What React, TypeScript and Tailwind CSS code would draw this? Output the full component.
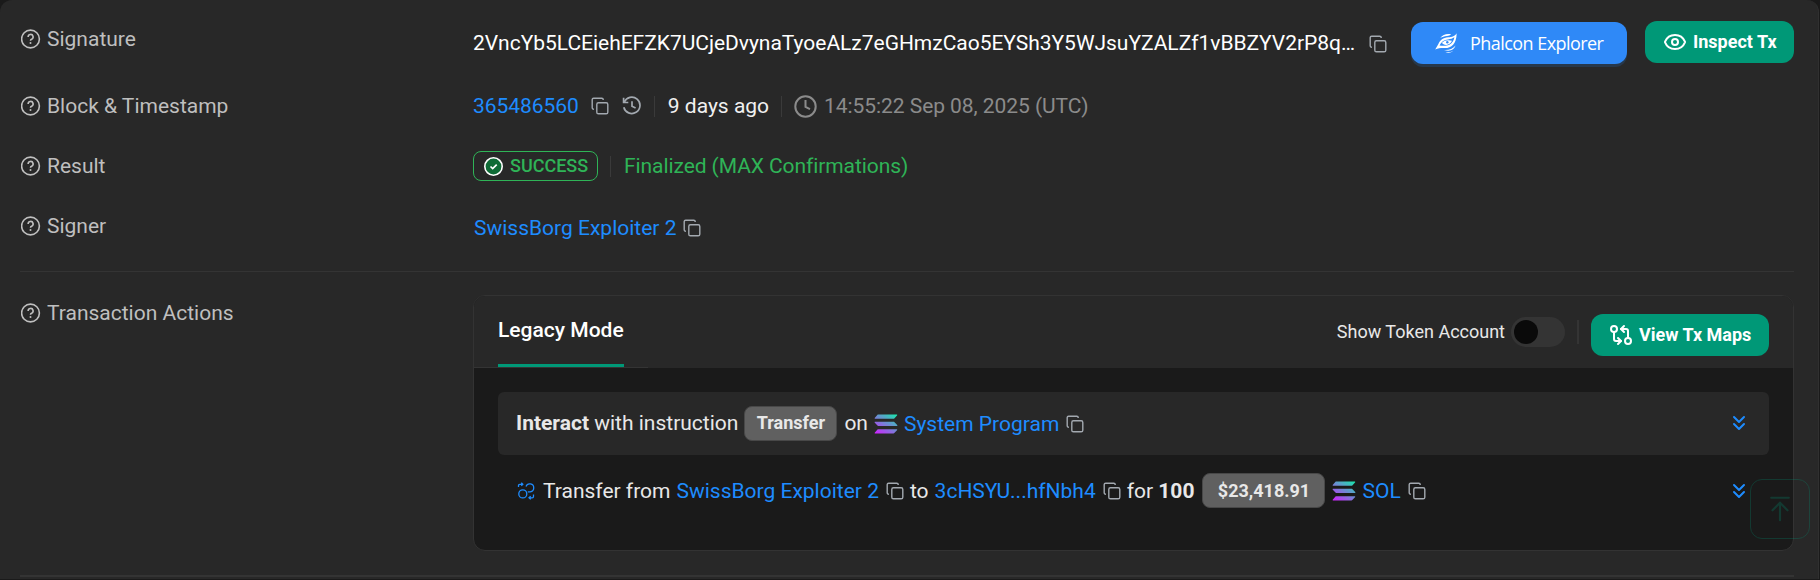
import React from "react";
import { ChevronsDown, Eye, GitCompareArrows, ArrowUpToLine } from "lucide-react";

function HelpIcon() {
  return (
    <svg className="ml-px size-5 shrink-0" viewBox="0 0 20 20" fill="none" stroke="#bfbfbf" strokeWidth="1.6">
      <circle cx="9.5" cy="10" r="8.9" />
      <path d="M7.1 7.9a2.5 2.5 0 1 1 3.5 2.3c-.8.3-1.1.7-1.1 1.5" />
      <circle cx="9.5" cy="14" r="1" fill="#bfbfbf" stroke="none" />
    </svg>
  );
}

function CopyIcon({ className = "" }: { className?: string }) {
  return (
    <svg className={`size-[18px] shrink-0 ${className}`} viewBox="0 0 18 18" fill="none" stroke="#a3a9b0" strokeWidth="1.4">
      <rect x="5.8" y="5.8" width="11" height="11" rx="1.6" />
      <path d="M2.9 12.2H2.6A1.4 1.4 0 0 1 1.2 10.8V2.6A1.4 1.4 0 0 1 2.6 1.2h8.2a1.4 1.4 0 0 1 1.4 1.4v.4" />
    </svg>
  );
}

function HistoryIcon() {
  return (
    <svg className="size-5 shrink-0" viewBox="0 0 20 20" fill="none" stroke="#a3a9b0" strokeWidth="1.7">
      <path d="M2.2 6.2A8.2 8.2 0 1 1 1.8 11.2" />
      <path d="M1.6 1.8v4.7h4.7" />
      <path d="M10 5.3v5l3.6 1.8" />
    </svg>
  );
}

function ClockIcon() {
  return (
    <svg className="size-[23px] shrink-0" viewBox="0 0 23 23" fill="none" stroke="#8b8b8b" strokeWidth="2">
      <circle cx="11.5" cy="11.5" r="10.2" />
      <path d="M11.5 5v7l4.5 2.2" />
    </svg>
  );
}

function SuccessIcon() {
  return (
    <svg className="size-[19px] shrink-0" viewBox="0 0 19 19" fill="none">
      <circle cx="9.5" cy="9.5" r="8.7" fill="#0f6b36" stroke="#fff" strokeWidth="1.6" />
      <path d="M6.5 9.5l2.2 2.1 4-3.9" stroke="#fff" strokeWidth="1.7" />
    </svg>
  );
}

function SolanaIcon({ id, className = "" }: { id: string; className?: string }) {
  return (
    <svg className={`h-5 w-6 shrink-0 ${className}`} viewBox="0 0 24 20">
      <defs>
        <linearGradient id={id} gradientUnits="userSpaceOnUse" x1="21" y1="-2" x2="5" y2="22">
          <stop offset="0" stopColor="#10f0a8" />
          <stop offset="1" stopColor="#d020ff" />
        </linearGradient>
      </defs>
      <g fill={`url(#${id})`}>
        <path d="M4.2.5H22.6c.6 0 .8.6.4 1L20.3 4.4c-.2.2-.5.3-.8.3H1.3c-.6 0-.8-.6-.4-1L3.5.8C3.7.6 3.9.5 4.2.5z" />
        <path d="M1.2 7.7h18.3c.3 0 .6.1.8.3l2.9 3c.4.4.1 1-.4 1H4.5c-.3 0-.6-.1-.8-.3L.8 8.7c-.4-.4-.1-1 .4-1z" />
        <path d="M4.2 15.2H22.6c.6 0 .8.6.4 1L20.3 19.1c-.2.2-.5.3-.8.3H1.3c-.6 0-.8-.6-.4-1l2.6-2.9c.2-.2.4-.3.7-.3z" />
      </g>
    </svg>
  );
}

function PhalconIcon() {
  return (
    <svg className="h-5 w-[22px] shrink-0" viewBox="0 0 22 20" fill="none">
      <g fill="#fff">
        <path d="M5.2 5C7.8 1.7 12 .3 16.2 1.5c-1.2.9-2.6 1.3-4.2 1.5-2.6.3-4.7.8-6.800 2z" />
        <path d="M21.7.2c-1.6 3-4.8 3.7-8.5 4.1C8 4.8 5.2 7 3.4 11L.2 16.6c3.3-1.6 6.2-1.7 9.3-1.6 6.6.2 11.9-3.4 12.2-14.8z" />
        <path d="M9 17c4.5.4 8.6-.8 11.6-4.5C19.3 16.6 15.3 19 9 17z" />
        <path d="M10.5 19.2c3.3.4 5.5-.1 7.5-1.5-1.8 2.2-4.8 2.8-7.5 1.5z" />
      </g>
      <path d="M4.5 12.6C6 8.8 9 6.8 13 6.4c2.6-.2 4.6-.8 6.4-2.1-.6 3.6-2.3 6.2-5.1 7.500-3.100 1.400-6.300 1-9.800.8z" fill="#2f89f7" />
      <path d="M7 9.700c2.400-2.900 6.800-3 10-1.900-1.200 2.900-3.500 4.200-5.900 4.100-2-.1-3.300-.7-4.100-2.200z" fill="#fff" />
      <circle cx="12.3" cy="9.200" r="1.200" fill="#2f89f7" />
    </svg>
  );
}

function TransferIcon() {
  return (
    <svg className="size-[18px] shrink-0" viewBox="0 0 18 18" fill="none" stroke="#1e8cff" strokeWidth="1.3">
      <circle cx="5.8" cy="11.9" r="4" />
      <path d="M9 4.400a4 4 0 1 1 4.300 5.400h-2.500" />
      <path d="M1.500 5V3.600c0-.8.5-1.300 1.300-1.300H5.800M4.300.8 5.800 2.300 4.300 3.800" />
      <path d="M16.500 12.500v2c0 .8-.5 1.300-1.300 1.300H12M13.700 14.200 12 15.800l1.700 1.600" />
    </svg>
  );
}

function Label({ children }: { children: React.ReactNode }) {
  return (
    <div className="flex h-6 w-[453px] shrink-0 items-center gap-[6px] text-[#bfbfbf]">
      <HelpIcon />
      <span>{children}</span>
    </div>
  );
}

function Divider({ className = "" }: { className?: string }) {
  return <span className={`h-[21px] w-px shrink-0 bg-[#3a3a3a] ${className}`} />;
}

export default function App() {
  return (
    <div className="h-[580px] w-[1820px] overflow-hidden bg-[#1a1a1a] font-[Roboto,sans-serif] text-[21px] leading-6 text-[#e8e8e8]">
      <div className="relative flex h-[579px] w-[1819px] flex-col rounded-t-xl border-r border-[#303030] bg-[#282828] pr-6 pl-5">
        <div className="flex h-[88px] items-start pt-[21px]">
          <div className="mt-[6px]">
            <Label>Signature</Label>
          </div>
          <span className="mt-[10px] w-[884px] shrink-0 whitespace-nowrap tracking-[-0.025px] text-white">
            2VncYb5LCEiehEFZK7UCjeDvynaTyoeALz7eGHmzCao5EYSh3Y5WJsuYZALZf1vBBZYV2rP8q…
          </span>
          <CopyIcon className="mt-[14px] ml-3" />
          <button className="mt-px ml-6 flex h-[42px] w-[216px] shrink-0 items-center rounded-xl bg-[#2f89f7] pl-6 font-['Open_Sans',sans-serif] text-[18px] text-white shadow-[0_3px_0_#27384b]">
            <PhalconIcon />
            <span className="ml-[13px] whitespace-nowrap tracking-[-0.55px]">Phalcon Explorer</span>
          </button>
          <button className="ml-[18px] flex h-[42px] w-[149px] shrink-0 items-center rounded-xl bg-[#009877] pl-[18px] text-[18px] font-bold text-white">
            <Eye size={24} />
            <span className="ml-[6px] whitespace-nowrap">Inspect Tx</span>
          </button>
        </div>

        <div className="flex h-[60px] items-start pt-[6px]">
          <Label>Block &amp; Timestamp</Label>
          <div className="flex h-6 items-center whitespace-nowrap">
            <span className="tracking-[-0.05px] text-[#1e8cff]">365486560</span>
            <CopyIcon className="mr-[13px] ml-3" />
            <HistoryIcon />
            <Divider className="mr-[13px] ml-3" />
            <span className="text-[#f0f0f0]">9 days ago</span>
            <Divider className="mr-3 ml-3" />
            <ClockIcon />
            <span className="ml-[7px] tracking-[-0.06px] text-[#8b8b8b]">14:55:22 Sep 08, 2025 (UTC)</span>
          </div>
        </div>

        <div className="flex h-[60px] items-start pt-[6px]">
          <Label>Result</Label>
          <div className="-mt-[3px] flex h-[30px] items-center whitespace-nowrap text-[#2fb457]">
            <span className="flex h-[30px] w-[125px] items-center rounded-lg border border-[#2fb457] pl-[10px] text-[18px] font-medium">
              <SuccessIcon />
              <span className="ml-[7px]">SUCCESS</span>
            </span>
            <Divider className="mr-[13px] ml-3" />
            <span className="tracking-[-0.08px]">Finalized (MAX Confirmations)</span>
          </div>
        </div>

        <div className="flex h-[64px] items-start border-b border-[#343434] pt-[6px]">
          <Label>Signer</Label>
          <div className="mt-[2px] ml-px flex h-6 items-center gap-[7px]">
            <span className="text-[#1e8cff]">SwissBorg Exploiter 2</span>
            <CopyIcon />
          </div>
        </div>

        <div className="flex h-[305px] items-start border-b-2 border-[#343434] pt-[23px]">
          <div className="mt-[6px]">
            <Label>Transaction Actions</Label>
          </div>
          <div className="h-[256px] w-[1321px] shrink-0 rounded-xl border border-[#333] bg-[#1a1a1a]">
            <div className="flex h-[72px] rounded-t-[11px] bg-[#282828] pr-6">
              <div className="flex w-[174px] border-b border-[#343434] pl-6">
                <div className="flex h-[71px] flex-col border-b-[3px] border-[#009877] pt-[22px] font-medium text-white">
                  <span className="whitespace-nowrap">Legacy Mode</span>
                </div>
              </div>
              <div className="ml-auto flex items-start pt-[18px]">
                <span className="mt-[6px] whitespace-nowrap text-[18px]">Show Token Account</span>
                <span className="mt-[3px] ml-[6px] flex h-[30px] w-[54px] items-center rounded-full bg-[#343434] pl-[3px]">
                  <span className="size-6 rounded-full bg-[#0a0a0a]" />
                </span>
                <span className="mt-[6px] mr-3 ml-3 h-6 w-[2px] bg-[#343434]" />
                <button className="flex h-[42px] w-[178px] items-center rounded-xl bg-[#009877] pl-[18px] text-[18px] font-bold text-white">
                  <GitCompareArrows size={24} />
                  <span className="ml-[6px] whitespace-nowrap">View Tx Maps</span>
                </button>
              </div>
            </div>
            <div className="px-6 pt-6">
              <div className="flex h-[63px] items-center rounded-md bg-[#282828] pr-[18px] pb-px pl-[18px] whitespace-nowrap">
                <span className="-mt-px">
                  <b>Interact</b> with instruction
                </span>
                <span className="mr-[7px] ml-[6px] flex h-[35px] w-[93px] items-center justify-center rounded-lg border border-[#484848] bg-[#606060] pb-px text-[18px] font-bold">
                  Transfer
                </span>
                <span className="-mt-px">on</span>
                <SolanaIcon id="sol-program" className="mt-px ml-[6px]" />
                <span className="mt-px ml-[6px] text-[#1e8cff]">System Program</span>
                <CopyIcon className="mt-px ml-[7px]" />
                <ChevronsDown className="-mt-px ml-auto text-[#1e8cff]" size={24} />
              </div>
              <div className="mt-1 flex h-[63px] items-center pr-[18px] pl-[19px] whitespace-nowrap">
                <TransferIcon />
                <span className="ml-2">Transfer from</span>
                <span className="ml-[6px] text-[#1e8cff]">SwissBorg Exploiter 2</span>
                <CopyIcon className="mr-[6px] ml-[7px]" />
                <span>to</span>
                <span className="ml-[6px] text-[#1e8cff]">3cHSYU...hfNbh4</span>
                <CopyIcon className="mr-[6px] ml-[7px]" />
                <span>
                  for <b>100</b>
                </span>
                <span className="mr-[7px] ml-2 flex h-[35px] w-[123px] items-center justify-center rounded-lg border border-[#484848] bg-[#606060] text-[18px] font-bold">
                  $23,418.91
                </span>
                <SolanaIcon id="sol-token" />
                <span className="ml-[6px] text-[#1e8cff]">SOL</span>
                <CopyIcon className="ml-[7px]" />
                <ChevronsDown className="ml-auto text-[#1e8cff]" size={24} />
              </div>
            </div>
          </div>
        </div>

        <button className="absolute top-[479px] left-[1750px] flex size-[60px] items-center justify-center rounded-xl border border-[#009877] text-[#009877] opacity-25">
          <ArrowUpToLine size={30} strokeWidth={1.7} />
        </button>
      </div>
    </div>
  );
}
